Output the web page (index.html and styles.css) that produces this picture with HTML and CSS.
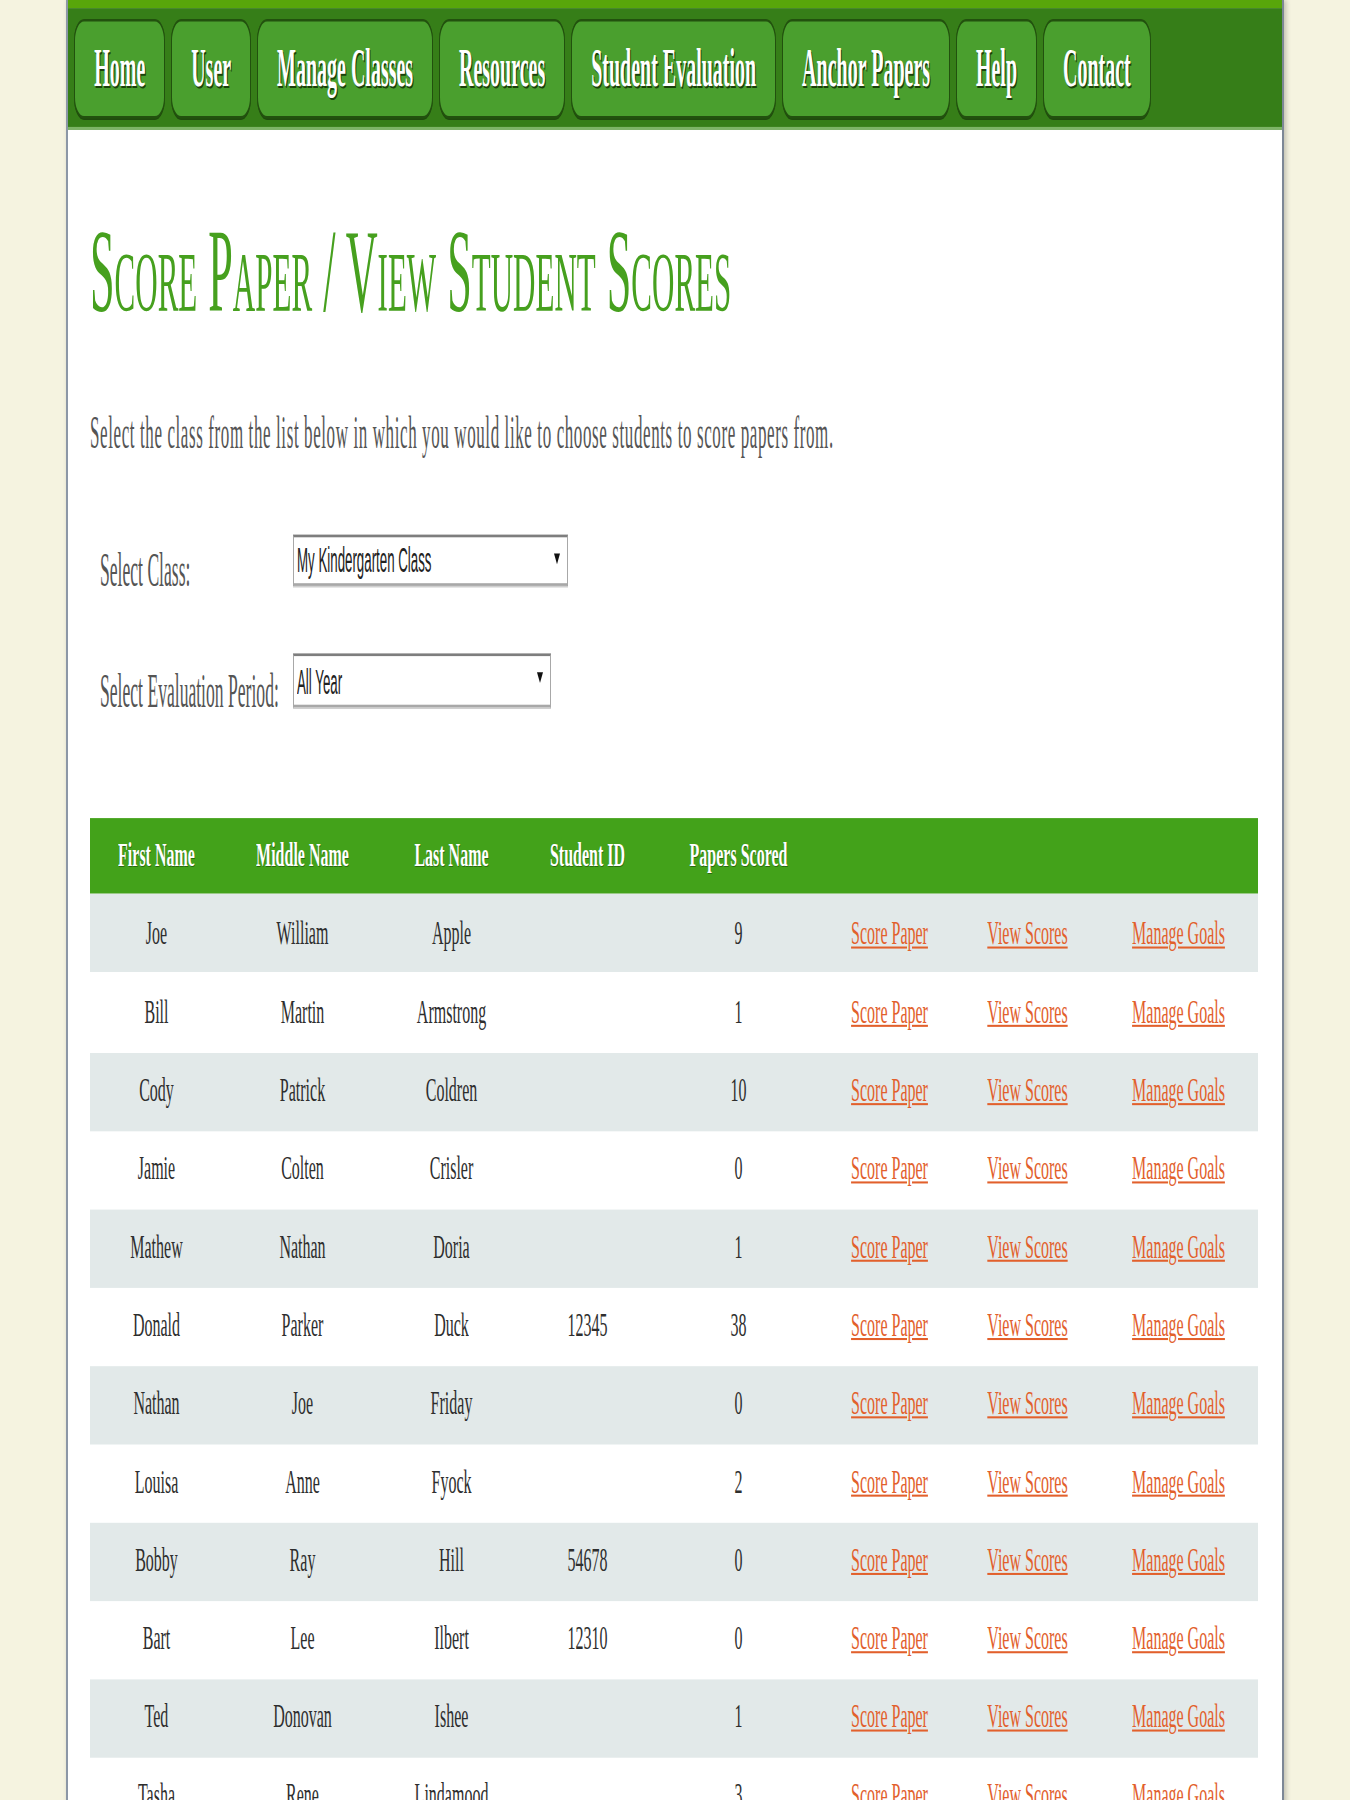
FILE: index.html
```html
<!DOCTYPE html>
<html lang="en">
<head>
<meta charset="utf-8">
<title>Score Paper / View Student Scores</title>
<link rel="stylesheet" href="styles.css">
</head>
<body>
<div class="page">
  <div class="topbar"></div>
  <nav class="nav">
    <a class="navbtn" href="#">Home</a>
    <a class="navbtn" href="#">User</a>
    <a class="navbtn" href="#">Manage Classes</a>
    <a class="navbtn" href="#">Resources</a>
    <a class="navbtn" href="#">Student Evaluation</a>
    <a class="navbtn" href="#">Anchor Papers</a>
    <a class="navbtn" href="#">Help</a>
    <a class="navbtn" href="#">Contact</a>
  </nav>
  <main class="content">
    <h1 class="title">Score Paper / View Student Scores</h1>
    <p class="intro">Select the class from the list below in which you would like to choose students to score papers from.</p>
    <div class="field field-first">
      <label class="field-label" for="cls">Select Class:</label>
      <div class="select-wrap select-class">
        <select class="select" id="cls"><option>My Kindergarten Class</option></select>
        <span class="arrow"></span>
      </div>
    </div>
    <div class="field field-second">
      <label class="field-label" for="per">Select Evaluation Period:</label>
      <div class="select-wrap select-period">
        <select class="select" id="per"><option>All Year</option></select>
        <span class="arrow"></span>
      </div>
    </div>
    <table class="students">
      <colgroup>
        <col class="c1"><col class="c2"><col class="c3"><col class="c4"><col class="c5"><col class="c6"><col class="c7"><col class="c8">
      </colgroup>
      <thead>
        <tr>
          <th><span class="cell">First Name</span></th>
          <th><span class="cell">Middle Name</span></th>
          <th><span class="cell">Last Name</span></th>
          <th><span class="cell">Student ID</span></th>
          <th><span class="cell">Papers Scored</span></th>
          <th></th><th></th><th></th>
        </tr>
      </thead>
      <tbody>
        <tr class="alt"><td><span class="cell">Joe</span></td><td><span class="cell">William</span></td><td><span class="cell">Apple</span></td><td></td><td><span class="cell">9</span></td><td><a class="cell link" href="#">Score Paper</a></td><td><a class="cell link" href="#">View Scores</a></td><td><a class="cell link" href="#">Manage Goals</a></td></tr>
        <tr><td><span class="cell">Bill</span></td><td><span class="cell">Martin</span></td><td><span class="cell">Armstrong</span></td><td></td><td><span class="cell">1</span></td><td><a class="cell link" href="#">Score Paper</a></td><td><a class="cell link" href="#">View Scores</a></td><td><a class="cell link" href="#">Manage Goals</a></td></tr>
        <tr class="alt"><td><span class="cell">Cody</span></td><td><span class="cell">Patrick</span></td><td><span class="cell">Coldren</span></td><td></td><td><span class="cell">10</span></td><td><a class="cell link" href="#">Score Paper</a></td><td><a class="cell link" href="#">View Scores</a></td><td><a class="cell link" href="#">Manage Goals</a></td></tr>
        <tr><td><span class="cell">Jamie</span></td><td><span class="cell">Colten</span></td><td><span class="cell">Crisler</span></td><td></td><td><span class="cell">0</span></td><td><a class="cell link" href="#">Score Paper</a></td><td><a class="cell link" href="#">View Scores</a></td><td><a class="cell link" href="#">Manage Goals</a></td></tr>
        <tr class="alt"><td><span class="cell">Mathew</span></td><td><span class="cell">Nathan</span></td><td><span class="cell">Doria</span></td><td></td><td><span class="cell">1</span></td><td><a class="cell link" href="#">Score Paper</a></td><td><a class="cell link" href="#">View Scores</a></td><td><a class="cell link" href="#">Manage Goals</a></td></tr>
        <tr><td><span class="cell">Donald</span></td><td><span class="cell">Parker</span></td><td><span class="cell">Duck</span></td><td><span class="cell">12345</span></td><td><span class="cell">38</span></td><td><a class="cell link" href="#">Score Paper</a></td><td><a class="cell link" href="#">View Scores</a></td><td><a class="cell link" href="#">Manage Goals</a></td></tr>
        <tr class="alt"><td><span class="cell">Nathan</span></td><td><span class="cell">Joe</span></td><td><span class="cell">Friday</span></td><td></td><td><span class="cell">0</span></td><td><a class="cell link" href="#">Score Paper</a></td><td><a class="cell link" href="#">View Scores</a></td><td><a class="cell link" href="#">Manage Goals</a></td></tr>
        <tr><td><span class="cell">Louisa</span></td><td><span class="cell">Anne</span></td><td><span class="cell">Fyock</span></td><td></td><td><span class="cell">2</span></td><td><a class="cell link" href="#">Score Paper</a></td><td><a class="cell link" href="#">View Scores</a></td><td><a class="cell link" href="#">Manage Goals</a></td></tr>
        <tr class="alt"><td><span class="cell">Bobby</span></td><td><span class="cell">Ray</span></td><td><span class="cell">Hill</span></td><td><span class="cell">54678</span></td><td><span class="cell">0</span></td><td><a class="cell link" href="#">Score Paper</a></td><td><a class="cell link" href="#">View Scores</a></td><td><a class="cell link" href="#">Manage Goals</a></td></tr>
        <tr><td><span class="cell">Bart</span></td><td><span class="cell">Lee</span></td><td><span class="cell">Ilbert</span></td><td><span class="cell">12310</span></td><td><span class="cell">0</span></td><td><a class="cell link" href="#">Score Paper</a></td><td><a class="cell link" href="#">View Scores</a></td><td><a class="cell link" href="#">Manage Goals</a></td></tr>
        <tr class="alt"><td><span class="cell">Ted</span></td><td><span class="cell">Donovan</span></td><td><span class="cell">Ishee</span></td><td></td><td><span class="cell">1</span></td><td><a class="cell link" href="#">Score Paper</a></td><td><a class="cell link" href="#">View Scores</a></td><td><a class="cell link" href="#">Manage Goals</a></td></tr>
        <tr><td><span class="cell">Tasha</span></td><td><span class="cell">Rene</span></td><td><span class="cell">Lindamood</span></td><td></td><td><span class="cell">3</span></td><td><a class="cell link" href="#">Score Paper</a></td><td><a class="cell link" href="#">View Scores</a></td><td><a class="cell link" href="#">Manage Goals</a></td></tr>
      </tbody>
    </table>
  </main>
</div>
</body>
</html>
```
FILE: styles.css
```css
html {
  background: #f5f3e0;
}

body {
  margin: 0;
  min-height: 1900px;
  font-family: "Liberation Serif", "Times New Roman", serif;
}

/* The reference is a vertically stretched capture; the page is laid out
   in natural proportions and stretched as a whole. */
.page {
  width: 1214px;
  margin: 0 auto;
  background: #ffffff;
  border-left: 2px solid #8c97a6;
  border-right: 2px solid #7d8796;
  box-shadow: 2px 0 3px rgba(0, 0, 0, 0.22);
  transform: scaleY(2.7);
  transform-origin: 50% 0;
}

.topbar {
  height: 3px;
  background: #58a60a;
}

.nav {
  display: flex;
  gap: 5.5px;
  padding: 3.7px 6px;
  background: #367e18;
  border-bottom: 1px solid #7db466;
}

.navbtn {
  display: block;
  height: 37px;
  box-sizing: border-box;
  padding: 0 19.2px;
  border: 1px solid #22510e;
  border-radius: 10px / 8px;
  background: #4a9f2e;
  color: #ffffff;
  font-weight: bold;
  font-size: 20px;
  line-height: 35px;
  text-decoration: none;
  text-shadow: 1px 0.6px 0 #1a420a;
  box-shadow: 0 0.4px 0 #1f4a0d;
}

.content {
  padding: 0 23px 0 22px;
}

.title {
  margin: 31px 0 0;
  font-size: 44.2px;
  line-height: 1;
  font-weight: normal;
  font-variant: small-caps;
  color: #46a01e;
}

.intro {
  margin: 28.1px 0 0;
  font-size: 17px;
  line-height: 1;
  letter-spacing: 0.6px;
  color: #555555;
}

.field {
  display: flex;
  align-items: flex-start;
  height: 19.3px;
}

.field-first {
  margin-top: 29.3px;
}

.field-second {
  margin-top: 25.2px;
}

.field-label {
  width: 193px;
  padding-left: 10px;
  margin-top: 5.2px;
  font-size: 17.6px;
  line-height: 1;
  color: #555555;
}

.select-wrap {
  position: relative;
  height: 19.3px;
}

.select-class {
  width: 275px;
}

.select-period {
  width: 258px;
}

.select {
  display: block;
  appearance: none;
  -webkit-appearance: none;
  width: 100%;
  height: 19.3px;
  box-sizing: border-box;
  margin: 0;
  padding: 0 0 0 3px;
  border: 1px solid #a8a8a8;
  border-top-color: #7e7e7e;
  border-radius: 0;
  background: #ffffff;
  box-shadow: 0 0.6px 0 #cfcfcf;
  font-family: "Liberation Sans", Arial, sans-serif;
  font-size: 13.3px;
  color: #222222;
}

.arrow {
  position: absolute;
  right: 8px;
  top: 7px;
  width: 0;
  height: 0;
  border-left: 3px solid transparent;
  border-right: 3px solid transparent;
  border-top: 4.8px solid #111111;
  pointer-events: none;
}

.students {
  margin-top: 41.2px;
  width: 1168px;
  border-collapse: collapse;
  table-layout: fixed;
}

.c1 { width: 133px; }
.c2 { width: 159px; }
.c3 { width: 139px; }
.c4 { width: 133px; }
.c5 { width: 169px; }
.c6 { width: 133px; }
.c7 { width: 143px; }
.c8 { width: 159px; }

.students th {
  height: 28.5px;
  padding: 0;
  background: #43a21a;
  color: #ffffff;
  font-weight: bold;
  font-size: 16px;
  text-align: center;
  text-shadow: 0.5px 0.4px 0 rgba(20, 60, 5, 0.55);
}

.students td {
  height: 29.05px;
  padding: 0;
  font-size: 16px;
  text-align: center;
  color: #2e2e2e;
}

.students tr.alt td {
  background: #e2e9e9;
}

.cell {
  display: inline-block;
  transform: scaleY(0.76);
}

.link {
  color: #e2602c;
  text-decoration: underline;
}
```
